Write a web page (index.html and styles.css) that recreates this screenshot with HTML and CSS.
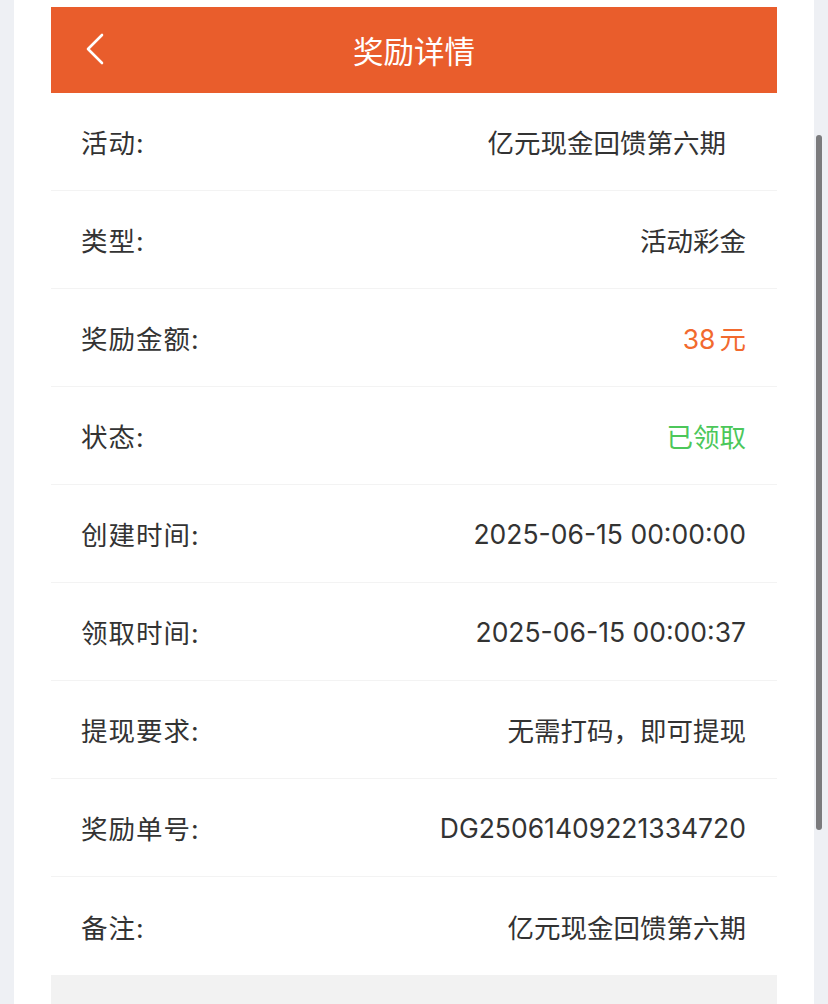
FILE: index.html
```html
<!DOCTYPE html>
<html lang="zh-CN">
  <head>
    <meta charset="UTF-8" />
    <meta name="viewport" content="width=device-width, initial-scale=1.0" />
    <title>奖励详情</title>
    <link rel="stylesheet" href="styles.css">
  </head>
  <body>
    <div class="screen">
      <div class="side"></div>
      <div class="page">
        <div class="column">
          <div class="header">
            <span class="back">
              <svg width="20" height="32" viewBox="0 0 20 32">
                <path d="M17 2 L3 16 L17 30" fill="none" stroke="#fff" stroke-width="2.6" stroke-linecap="round" stroke-linejoin="round" />
              </svg>
            </span>
            <h1 class="title">奖励详情</h1>
          </div>

          <div class="list">
            <div class="row">
              <span class="label">活动:</span>
              <span class="value first">亿元现金回馈第六期</span>
            </div>
            <div class="row">
              <span class="label">类型:</span>
              <span class="value">活动彩金</span>
            </div>
            <div class="row">
              <span class="label">奖励金额:</span>
              <span class="value money">38<span class="unit">元</span></span>
            </div>
            <div class="row">
              <span class="label">状态:</span>
              <span class="value done">已领取</span>
            </div>
            <div class="row">
              <span class="label">创建时间:</span>
              <span class="value">2025-06-15 00:00:00</span>
            </div>
            <div class="row">
              <span class="label">领取时间:</span>
              <span class="value">2025-06-15 00:00:37</span>
            </div>
            <div class="row">
              <span class="label">提现要求:</span>
              <span class="value">无需打码，即可提现</span>
            </div>
            <div class="row">
              <span class="label">奖励单号:</span>
              <span class="value">DG25061409221334720</span>
            </div>
            <div class="row">
              <span class="label">备注:</span>
              <span class="value">亿元现金回馈第六期</span>
            </div>
          </div>
          <div class="footer"></div>
        </div>
      </div>
      <div class="gutter">
        <div class="thumb"></div>
      </div>
    </div>
  </body>
</html>
```

FILE: styles.css
```css
* {
  margin: 0;
  padding: 0;
  box-sizing: border-box;
}
html,
body {
  height: 100%;
}
body {
  font-family: Inter, "Noto Sans CJK SC", sans-serif;
  background-color: #eef0f4;
  color: #333;
  overflow: hidden;
}

.screen {
  display: flex;
  height: 1004px;
}

.side {
  width: 14px;
  background-color: #eef0f4;
}

.page {
  flex: 1;
  background-color: #fff;
  padding-top: 7px;
}

.column {
  width: 726px;
  margin: 0 auto;
  display: flex;
  flex-direction: column;
  height: 997px;
}

.header {
  height: 86px;
  background-color: #e95d2c;
  display: flex;
  align-items: center;
  justify-content: center;
  position: relative;
}

.back {
  position: absolute;
  left: 34px;
  top: 26px;
  display: flex;
}

.title {
  color: #fff;
  font-size: 30.5px;
  font-weight: 400;
  font-family: "Noto Sans CJK SC", sans-serif;
}

.row {
  height: 98px;
  border-bottom: 1px solid #f3f3f3;
  display: flex;
  align-items: center;
  justify-content: space-between;
  padding: 0 31px 0 30px;
  font-size: 26.5px;
}

.row:last-child {
  border-bottom: none;
}

.label {
  letter-spacing: 1px;
}

.value.first {
  margin-right: 20px;
}

.money {
  color: #f26a2e;
}

.money .unit {
  margin-left: 4px;
}

.done {
  color: #4cc75a;
}

.footer {
  flex: 1;
  background-color: #f2f2f2;
}

.gutter {
  width: 14px;
  background-color: #eef0f4;
  padding: 135px 0 0 2px;
}

.thumb {
  width: 6px;
  height: 695px;
  border-radius: 3px;
  background-color: #7b7b7d;
}
```
